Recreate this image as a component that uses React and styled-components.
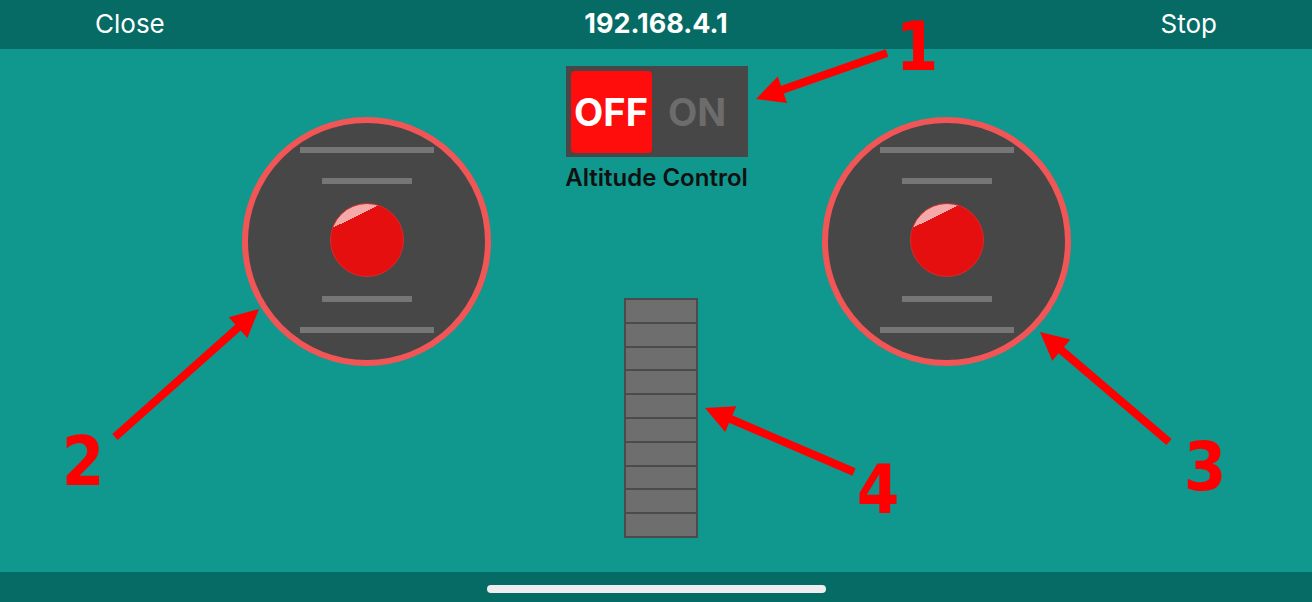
import React from 'react';
import styled, { createGlobalStyle } from 'styled-components';

const GlobalStyle = createGlobalStyle`
  body {
    margin: 0;
    font-family: Inter, "Liberation Sans", sans-serif;
  }
`;

const Screen = styled.div`
  position: relative;
  width: 1312px;
  height: 602px;
  display: flex;
  flex-direction: column;
  background: #10978e;
  overflow: hidden;
`;

const NavBar = styled.header`
  height: 49px;
  display: grid;
  grid-template-columns: 1fr auto 1fr;
  align-items: center;
  padding: 0 95px 3px;
  box-sizing: border-box;
  background: #056b64;
  color: #fff;
  font-size: 26px;
`;

const NavButton = styled.span`
  justify-self: ${p => (p.$right ? 'end' : 'start')};
`;

const NavTitle = styled.span`
  font-weight: 700;
  font-size: 27px;
`;

const Pad = styled.main`
  flex: 1;
  display: grid;
  grid-template-columns: 249px 331px 249px;
  align-items: start;
  padding-left: 242px;
`;

const Joystick = styled.div`
  box-sizing: border-box;
  margin-top: 68px;
  width: 249px;
  height: 249px;
  border: 6px solid #f25555;
  border-radius: 50%;
  background: #474747;
  display: flex;
  flex-direction: column;
  align-items: center;
  padding-top: 24px;
`;

const Tick = styled.div`
  width: ${p => (p.$long ? 134 : 90)}px;
  height: 6px;
  background: #767676;
  margin-top: ${p => p.$gap || 0}px;
`;

const Knob = styled.div`
  box-sizing: border-box;
  width: 74px;
  height: 74px;
  margin-top: 19px;
  border-radius: 50%;
  border: 1px solid #d82a2a;
  background: linear-gradient(154deg, #f6a9a9 23%, #e60f10 23%);
`;

const Center = styled.div`
  display: flex;
  flex-direction: column;
  align-items: center;
`;

const Toggle = styled.div`
  box-sizing: border-box;
  margin-top: 17px;
  width: 182px;
  height: 91px;
  padding: 5px 5px 4px;
  display: flex;
  background: #474747;
`;

const Segment = styled.div`
  display: flex;
  align-items: center;
  justify-content: center;
  font-size: 38px;
  font-weight: 700;
  ${p =>
    p.$active
      ? 'width: 81px; background: #ff0c0c; color: #fff; border-radius: 4px;'
      : 'flex: 1; color: #6c6c6c;'}
`;

const Caption = styled.div`
  margin-top: 8px;
  font-size: 24px;
  font-weight: 600;
  color: #111;
  line-height: 26px;
`;

const Throttle = styled.div`
  box-sizing: border-box;
  margin-top: 107px;
  margin-left: 8px;
  width: 74px;
  height: 240px;
  padding: 2px;
  display: grid;
  grid-template-rows: repeat(10, 1fr);
  gap: 2px;
  background: #4b4b4b;
`;

const Cell = styled.div`
  background: #6e6e6e;
`;

const HomeBar = styled.footer`
  height: 30px;
  display: flex;
  justify-content: center;
  background: #056b64;
`;

const HomeIndicator = styled.div`
  margin-top: 13px;
  width: 339px;
  height: 8px;
  border-radius: 4px;
  background: #eeeef0;
`;

const Overlay = styled.svg`
  position: absolute;
  inset: 0;
  pointer-events: none;
`;

const Label = styled.text`
  font-family: "DejaVu Sans Condensed", "DejaVu Sans", sans-serif;
  font-weight: 700;
  font-size: 68px;
  fill: #ff0000;
`;

const arrows = [
  { tail: [887, 53], tip: [756, 99] },
  { tail: [115, 437], tip: [259, 309] },
  { tail: [1169, 442], tip: [1040, 332] },
  { tail: [854, 472], tip: [705, 408] },
];

const labels = [
  { n: '1', x: 917, y: 70 },
  { n: '2', x: 83, y: 485 },
  { n: '3', x: 1205, y: 490 },
  { n: '4', x: 878, y: 513 },
];

const Arrow = ({ tail, tip }) => {
  const dx = tip[0] - tail[0];
  const dy = tip[1] - tail[1];
  const len = Math.hypot(dx, dy);
  const ux = dx / len;
  const uy = dy / len;
  const head = 28;
  const half = 14;
  const bx = tip[0] - ux * head;
  const by = tip[1] - uy * head;
  const pts = [
    [tip[0], tip[1]],
    [bx - uy * half, by + ux * half],
    [bx + uy * half, by - ux * half],
  ].map(p => p.join(',')).join(' ');
  return (
    <g fill="#ff0000" stroke="#ff0000">
      <line x1={tail[0]} y1={tail[1]} x2={bx + ux * 2} y2={by + uy * 2} strokeWidth="8" />
      <polygon points={pts} stroke="none" />
    </g>
  );
};

const Stick = () => (
  <Joystick>
    <Tick $long />
    <Tick $gap={25} />
    <Knob />
    <Tick $gap={19} />
    <Tick $long $gap={25} />
  </Joystick>
);

export default function App() {
  return (
    <>
      <GlobalStyle />
      <Screen>
        <NavBar>
          <NavButton>Close</NavButton>
          <NavTitle>192.168.4.1</NavTitle>
          <NavButton $right>Stop</NavButton>
        </NavBar>
        <Pad>
          <Stick />
          <Center>
            <Toggle>
              <Segment $active>OFF</Segment>
              <Segment>ON</Segment>
            </Toggle>
            <Caption>Altitude Control</Caption>
            <Throttle>
              {Array.from({ length: 10 }, (_, i) => (
                <Cell key={i} />
              ))}
            </Throttle>
          </Center>
          <Stick />
        </Pad>
        <HomeBar>
          <HomeIndicator />
        </HomeBar>
        <Overlay width="1312" height="602" viewBox="0 0 1312 602">
          {arrows.map((a, i) => (
            <Arrow key={i} {...a} />
          ))}
          {labels.map(l => (
            <Label key={l.n} x={l.x} y={l.y} textAnchor="middle">
              {l.n}
            </Label>
          ))}
        </Overlay>
      </Screen>
    </>
  );
}
